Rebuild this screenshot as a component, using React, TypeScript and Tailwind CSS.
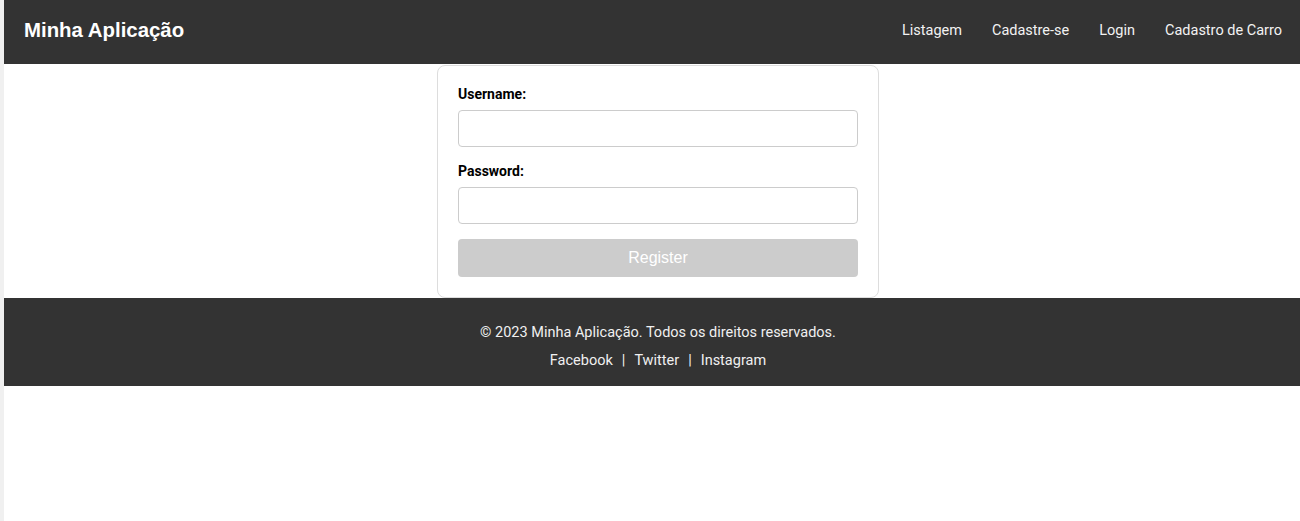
import React from "react";

const navLinks = ["Listagem", "Cadastre-se", "Login", "Cadastro de Carro"];

const Header = () => (
  <header className="flex h-16 items-center justify-between bg-[#333] pb-[3px] pl-5 pr-[18px]">
    <h1 className="font-['Liberation_Sans',Arial,sans-serif] text-[20.4px] font-bold text-white">
      Minha Aplicação
    </h1>
    <nav className="flex gap-[30px] font-['Roboto',sans-serif] text-[14.5px] text-[#f2f2f2]">
      {navLinks.map((link) => (
        <a key={link} href="#" className="leading-5">
          {link}
        </a>
      ))}
    </nav>
  </header>
);

const Field = ({
  label,
  type = "text",
  className = "mb-[15px]",
}: {
  label: string;
  type?: string;
  className?: string;
}) => (
  <div className={className}>
    <label className="mb-2 block font-['Roboto',sans-serif] text-[14px] font-bold leading-4 text-black">
      {label}
    </label>
    <input
      type={type}
      className="block h-[37px] w-full rounded-[4px] border border-[#ccc] bg-white px-2"
    />
  </div>
);

const LoginCard = () => (
  <div className="w-[442px] rounded-lg border border-[#ddd] bg-white p-5">
    <Field label="Username:" className="mb-4" />
    <Field label="Password:" type="password" />
    <button
      disabled
      className="block h-[38px] w-full rounded-[4px] bg-[#ccc] font-['Liberation_Sans',Arial,sans-serif] text-[16px] text-white"
    >
      Register
    </button>
  </div>
);

const Footer = () => (
  <footer className="bg-[#333] pl-3 pt-[25px] pb-[15px] text-center font-['Roboto',sans-serif] text-[14.5px] leading-5 text-[#f0f0f0]">
    <p>© 2023 Minha Aplicação. Todos os direitos reservados.</p>
    <p className="mt-2">
      <a href="#">Facebook</a>
      <span className="mx-[9px]">|</span>
      <a href="#">Twitter</a>
      <span className="mx-[9px]">|</span>
      <a href="#">Instagram</a>
    </p>
  </footer>
);

export default function App() {
  return (
    <div className="min-h-screen bg-[#f0f0f0] pl-1">
      <div className="min-h-screen bg-white">
        <Header />
        <main className="flex justify-center pl-3 pt-px">
          <LoginCard />
        </main>
        <Footer />
      </div>
    </div>
  );
}
